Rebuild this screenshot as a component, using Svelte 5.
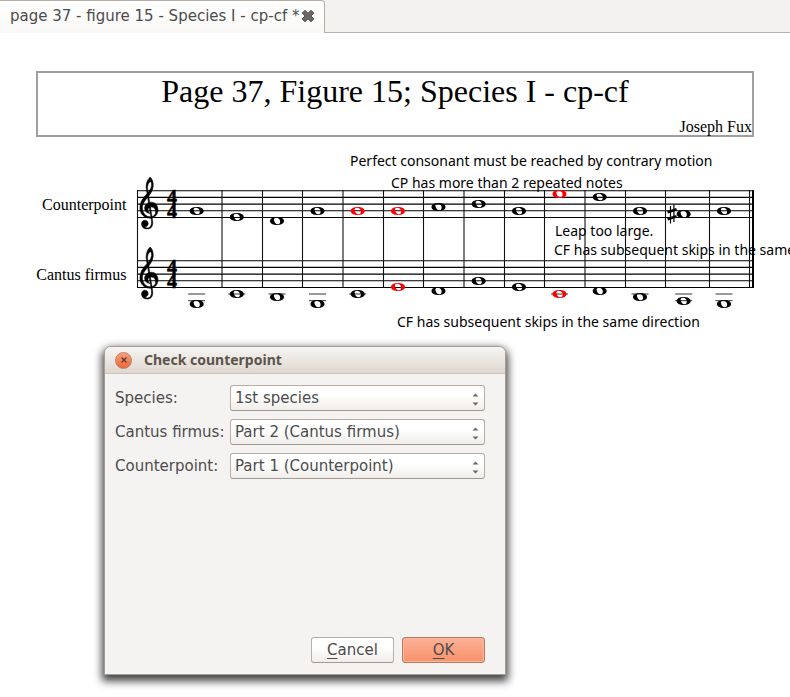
<script>
  const staffs = [
    { name: 'Counterpoint', top: 190.7 },
    { name: 'Cantus firmus', top: 260.7 }
  ];
  const lineOffsets = [0, 6.7, 13.4, 20.1, 26.8];
  const bars = [137.5, 222, 262.5, 302.5, 343, 383.5, 423.5, 464, 504.5, 544.5, 585, 625.5, 665.5, 709.5, 749.5];
  const columns = [196.7, 236.8, 277, 317.5, 357.7, 398, 438.5, 478.7, 519, 559.5, 599.7, 640, 683.7, 724];
  const upper = [211, 217, 221, 211, 211, 211, 207, 204, 211, 194, 197, 211, 214, 211];
  const lower = [304, 294, 297, 304, 294, 287, 291, 281, 287, 294, 291, 297, 301, 304];
  const upperErrors = [4, 5, 9];
  const lowerErrors = [5, 9];

  const notes = [
    ...columns.map((x, i) => ({ x, y: upper[i], error: upperErrors.includes(i), ledgers: [] })),
    ...columns.map((x, i) => ({
      x,
      y: lower[i],
      error: lowerErrors.includes(i),
      ledgers: [294, 300.7].filter((l) => l <= lower[i])
    }))
  ];

  const remarks = [
    { x: 350, y: 166, text: 'Perfect consonant must be reached by contrary motion' },
    { x: 391, y: 188, text: 'CP has more than 2 repeated notes' },
    { x: 555, y: 236, text: 'Leap too large.' },
    { x: 554, y: 255, text: 'CF has subsequent skips in the same' },
    { x: 397, y: 327, text: 'CF has subsequent skips in the same direction' }
  ];

  const notePath =
    'M-7 0C-7-2.6-3.6-4 0-4S7-2.6 7 0 3.6 4 0 4-7 2.6-7 0ZM-3.1-1.3C-2.8 1.5-1 3.4.9 3.3 2.9 3.2 3.5 1.5 2.9-.7 2.4-2.6.7-3.5-1-3.3-2.5-3.1-3.2-2.4-3.1-1.3Z';

  const fields = [
    { id: 'species', label: 'Species:', options: ['1st species'] },
    { id: 'cantus', label: 'Cantus firmus:', options: ['Part 2 (Cantus firmus)', 'Part 1 (Counterpoint)'] },
    { id: 'counter', label: 'Counterpoint:', options: ['Part 1 (Counterpoint)', 'Part 2 (Cantus firmus)'] }
  ];
</script>

<div class="app">
  <nav class="tabs">
    <div class="tab">
      <span>page 37 - figure 15 - Species I - cp-cf *</span>
      <button class="tab-close" aria-label="Close tab">
        <svg width="14" height="14" viewBox="0 0 14 14">
          <path d="M4 1.4 7 4.3 10 1.4 12.8 4 9.9 7 12.8 10 10 12.7 7 9.8 4 12.7 1.2 10 4.1 7 1.2 4Z" fill="#6a6967" stroke="#4b4a48" stroke-linejoin="round" />
        </svg>
      </button>
    </div>
    <div class="rest"></div>
  </nav>

  <main>
    <header class="frame">
      <h1>Page 37, Figure 15; Species I - cp-cf</h1>
      <p>Joseph Fux</p>
    </header>

    <svg class="score" viewBox="0 137 790 200" role="img" aria-label="Score">
      {#each staffs as staff}
        <text class="part" x="126.5" y={staff.top + 19.3} text-anchor="end">{staff.name}</text>
        {#each lineOffsets as offset}
          <path d="M137 {staff.top + offset}H754" stroke="#000" stroke-width="1.1" />
        {/each}
        <g transform="translate(0 {staff.top - 190.7})" stroke="#000" stroke-width=".5">
          <path d="M150.2 177.2C152.4 178.8 153.6 182.4 153.2 186.4 152.6 191.6 149 195.8 146.4 199 144 201.8 142.3 204.4 142.4 207.8 142.6 213 145.6 216.8 150.4 216.8 154 216.8 155.6 214.4 155.6 211.8 155.6 208.9 153.8 207.1 151.4 207.1 149.2 207.1 147.9 208.3 148 210 148.1 211.6 148.8 212.6 150 213.6 146.8 213 144.7 211.2 144.6 208.4 144.5 205 147.4 202.2 151.4 202.2 155.5 202.2 158 205.8 158 209.8 158 214.6 154.8 218.2 150 218.2 144 218.2 139.9 213.8 139.9 208 139.9 202.6 142.2 198.8 145.4 195.4 148.2 192.4 151.2 189.2 151.5 185.4 151.7 183 151.2 181.8 150.4 181.8Z" />
          <path d="M150.2 177.2C147 179.4 145.6 184.5 146.3 189L151.4 220.5C152 225 150.4 228 147.2 228 146.4 228 145.6 227.5 145.3 226.9 147 226.8 148.2 225.4 148.2 223.6 148.2 221.6 146.8 220.2 144.9 220.2 142.9 220.2 141.5 221.7 141.5 224 141.5 227 143.9 229 147.4 229 151.6 229 153.4 225.5 152.6 220.5L147.7 189.5C147.1 186 148.4 182.4 150.4 181.8Z" />
        </g>
        <text class="meter" x="172" y={staff.top + 13.3} text-anchor="middle">4</text>
        <text class="meter" x="172" y={staff.top + 26.8} text-anchor="middle">4</text>
      {/each}

      {#each bars as x}
        <path d="M{x} 190V288" stroke="#111" stroke-width="1.1" />
      {/each}
      <path d="M753 190V288" stroke="#000" stroke-width="2" />

      {#each notes as note}
        {#each note.ledgers as y}
          <path d="M{note.x - 8.5} {y}h17" stroke="#333" stroke-width="1" />
        {/each}
        <path d={notePath} fill={note.error ? '#f00' : '#000'} fill-rule="evenodd" transform="translate({note.x} {note.y})" />
      {/each}

      <path d="M670.5 206V223.5M673.9 204.5V222" stroke="#000" stroke-width="1.2" />
      <path d="M667.6 212.2 676.6 209.2M667.6 219.2 676.6 216.2" stroke="#000" stroke-width="2.6" />

      {#each remarks as remark}
        <text class="remark" x={remark.x} y={remark.y}>{remark.text}</text>
      {/each}
    </svg>
  </main>

  <section class="dialog" role="dialog" aria-labelledby="dialog-title">
    <div class="titlebar">
      <button class="dialog-close" aria-label="Close">
        <svg width="8" height="8" viewBox="0 0 8 8"><path d="M1.5 1.5 6.5 6.5M6.5 1.5 1.5 6.5" stroke="#53352a" stroke-width="1.1" /></svg>
      </button>
      <h2 id="dialog-title">Check counterpoint</h2>
    </div>
    <form onsubmit={(e) => e.preventDefault()}>
      <div class="fields">
        {#each fields as field}
          <label for={field.id}>{field.label}</label>
          <div class="combo">
            <select id={field.id}>
              {#each field.options as option}
                <option>{option}</option>
              {/each}
            </select>
            <svg width="7" height="13" viewBox="0 0 7 13" aria-hidden="true">
              <path d="M.5 3.5 3.5 .5 6.5 3.5ZM.5 9.5H6.5L3.5 12.5Z" fill="#6b6966" />
            </svg>
          </div>
        {/each}
      </div>
      <div class="actions">
        <button type="button"><u>C</u>ancel</button>
        <button type="submit" class="primary"><u>O</u>K</button>
      </div>
    </form>
  </section>
</div>

<style>
  :global(body) {
    margin: 0;
    background: #fff;
  }
  .app {
    position: relative;
    min-height: 100vh;
    overflow: hidden;
    font: 15px/20px "DejaVu Sans", sans-serif;
    color: #4c4c4c;
  }
  .tabs {
    display: flex;
    height: 33px;
    background: #f3f2f1;
  }
  .tab {
    display: flex;
    align-items: center;
    gap: 2px;
    box-sizing: border-box;
    padding: 0 9px 2px 10px;
    border-top: 1px solid #b8aca3;
    border-right: 1px solid #b8aca3;
    border-radius: 0 4px 0 0;
    background: linear-gradient(#fff, #f9f8f7);
    white-space: nowrap;
  }
  .tab-close {
    display: flex;
    padding: 0;
    border: 0;
    background: none;
  }
  .rest {
    flex: 1;
    box-sizing: border-box;
    border-bottom: 1px solid #b5b1ad;
  }
  .frame {
    display: flex;
    flex-direction: column;
    justify-content: space-between;
    box-sizing: border-box;
    height: 66px;
    margin: 38px 36px 0;
    border: 2px solid #a0a0a4;
    font-family: "Liberation Serif", serif;
    color: #000;
  }
  h1 {
    margin: 0;
    font-size: 32px;
    line-height: 36px;
    font-weight: 400;
    text-align: center;
  }
  .frame p {
    margin: 0;
    font-size: 16px;
    line-height: 16px;
    text-align: right;
  }
  .score {
    display: block;
    width: 100%;
  }
  .part {
    font: 16px "Liberation Serif", serif;
  }
  .meter {
    font: bold 20px "Liberation Serif", serif;
    stroke: #000;
    stroke-width: 0.5px;
  }
  .remark {
    font: 14px "Noto Sans", sans-serif;
  }
  .dialog {
    position: absolute;
    left: 104px;
    top: 346px;
    display: flex;
    flex-direction: column;
    box-sizing: border-box;
    width: 402px;
    height: 329px;
    border: 1px solid #a79c92;
    border-radius: 7px 7px 0 0;
    background: #f4f3f2;
    box-shadow: 0 4px 9px 2px rgba(0, 0, 0, 0.75);
  }
  .titlebar {
    display: flex;
    align-items: center;
    gap: 12px;
    box-sizing: border-box;
    height: 27px;
    padding: 0 10px;
    border-bottom: 1px solid #cfc3b8;
    border-radius: 6px 6px 0 0;
    background: linear-gradient(#f6f4f2, #dfd8d0);
  }
  .dialog-close {
    display: flex;
    align-items: center;
    justify-content: center;
    box-sizing: border-box;
    width: 17px;
    height: 17px;
    padding: 0;
    border: 1px solid #bd8166;
    border-radius: 50%;
    background: linear-gradient(#f7a080, #ec6639);
  }
  h2 {
    margin: 0;
    font: bold 14px/20px "Noto Sans", sans-serif;
    color: #5b544c;
  }
  form {
    flex: 1;
    display: flex;
    flex-direction: column;
    justify-content: space-between;
    padding: 11px 20px 11px 10px;
  }
  .fields {
    display: grid;
    grid-template-columns: 107px 1fr;
    gap: 8px;
    align-items: center;
  }
  label {
    white-space: nowrap;
  }
  .combo {
    position: relative;
    display: flex;
  }
  .combo svg {
    position: absolute;
    right: 6px;
    top: 8px;
    pointer-events: none;
  }
  select,
  .actions button {
    box-sizing: border-box;
    height: 26px;
    border: 1px solid #b9aea6;
    border-bottom-color: #a5988f;
    border-radius: 3px;
    background: linear-gradient(#fff 40%, #f0eeeb);
    font: inherit;
    color: inherit;
  }
  select {
    appearance: none;
    width: 100%;
    padding: 0 20px 0 4px;
  }
  .actions {
    display: flex;
    justify-content: flex-end;
    gap: 8px;
  }
  .actions button {
    width: 83px;
    padding: 0;
  }
  .actions .primary {
    border-color: #b27a63;
    background: linear-gradient(#fcb096, #f8926a);
    box-shadow: inset 0 0 0 1px #fcb89f;
  }
  u {
    text-underline-offset: 3px;
  }
</style>
